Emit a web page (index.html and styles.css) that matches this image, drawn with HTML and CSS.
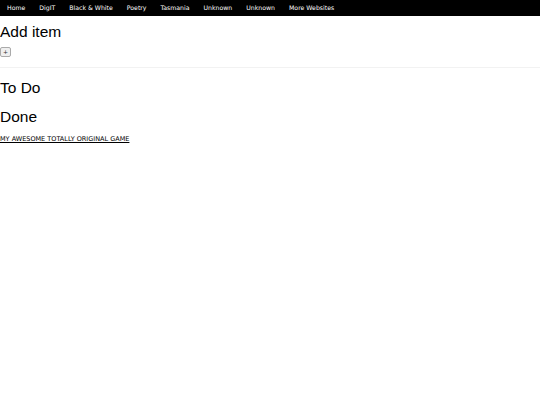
FILE: index.html
```html
<!DOCTYPE html>
<html>
<head>
<meta charset="utf-8">
<link rel="stylesheet" href="styles.css">
</head>
<body>
<nav class="topnav">
  <a href="#">Home</a>
  <a href="#">DigIT</a>
  <a href="#">Black &amp; White</a>
  <a href="#">Poetry</a>
  <a href="#">Tasmania</a>
  <a href="#">Unknown</a>
  <a href="#">Unknown</a>
  <a href="#">More Websites</a>
</nav>
<section class="add">
  <h1 class="title">Add item</h1>
  <button class="add-btn">+</button>
</section>
<section class="lists">
  <h2 class="title">To Do</h2>
  <h2 class="title">Done</h2>
  <a class="game" href="#">MY AWESOME TOTALLY ORIGINAL GAME</a>
</section>
</body>
</html>
```

FILE: styles.css
```css
html, body {
  margin: 0;
  padding: 0;
  background: #fff;
}
body {
  font-family: "Liberation Sans", Arial, sans-serif;
  color: #000;
}
.topnav {
  display: flex;
  background: #000;
  height: 16px;
  align-items: center;
}
.topnav a {
  font-family: "DejaVu Sans", Verdana, sans-serif;
  font-size: 6.2px;
  color: #fff;
  text-decoration: none;
  padding: 0 7px;
  line-height: 16px;
}
.add {
  border-bottom: 1px solid #f2f2f2;
  padding-bottom: 10px;
}
.title {
  font-weight: normal;
  font-size: 15.5px;
  line-height: 20px;
  margin: 0;
}
.add .title {
  margin-top: 6px;
}
.add-btn {
  display: block;
  margin-top: 5px;
  width: 11px;
  height: 10px;
  padding: 0;
  font-family: "DejaVu Sans", sans-serif;
  font-size: 6px;
  line-height: 8px;
  border: 1px solid #aaa;
  border-radius: 2px;
  background: #efefef;
  color: #333;
}
.lists .title:first-child {
  margin-top: 10px;
}
.lists .title + .title {
  margin-top: 9px;
}
.game {
  display: inline-block;
  margin-top: 7px;
  font-family: "DejaVu Sans", Verdana, sans-serif;
  font-size: 6.5px;
  line-height: 8px;
  color: #000;
}
```
